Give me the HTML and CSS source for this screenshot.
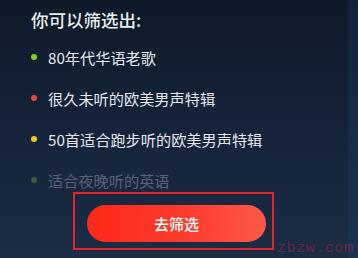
FILE: index.html
```html
<!DOCTYPE html>
<html lang="zh-CN">
<head>
<meta charset="utf-8">
<link rel="stylesheet" href="styles.css">
</head>
<body>
<div class="page">
  <main class="panel">
    <h1 class="title">你可以筛选出:</h1>
    <ul class="list">
      <li class="item"><span class="dot dot-green"></span>80年代华语老歌</li>
      <li class="item"><span class="dot dot-red"></span>很久未听的欧美男声特辑</li>
      <li class="item"><span class="dot dot-yellow"></span>50首适合跑步听的欧美男声特辑</li>
      <li class="item item-faded"><span class="dot dot-green"></span>适合夜晚听的英语</li>
    </ul>
    <div class="mark-box">
      <button class="cta">去筛选</button>
    </div>
  </main>
  <div class="edge"></div>
  <div class="watermark">zbzw.com</div>
</div>
</body>
</html>
```
FILE: styles.css
```css
* { box-sizing: border-box; }
html, body { margin: 0; padding: 0; }
body {
  width: 358px;
  height: 258px;
  overflow: hidden;
  font-family: "Noto Sans CJK SC", "Noto Sans", sans-serif;
}
.page {
  position: relative;
  display: flex;
  width: 358px;
  height: 258px;
}
.panel {
  flex: 0 0 348px;
  height: 258px;
  background: linear-gradient(180deg, #0f1a29 0%, #15243a 50%, #1b2c45 100%);
  padding-left: 31px;
  display: flex;
  flex-direction: column;
}
.edge {
  flex: 1 1 auto;
  background: linear-gradient(180deg, #14233c 0%, #1a2d4a 60%, #1e3352 100%);
}
.title {
  margin: 0;
  padding-top: 8px;
  height: 32px;
  line-height: 24px;
  font-size: 17.5px;
  font-weight: 500;
  color: #e9edf2;
}
.list {
  list-style: none;
  margin: 0;
  padding: 14.5px 0 0 0;
  display: flex;
  flex-direction: column;
  gap: 21px;
}
.item {
  display: flex;
  align-items: center;
  height: 20px;
  line-height: 20px;
  font-size: 15.2px;
  color: #e4e8ee;
}
.item-faded { opacity: 0.3; }
.dot {
  width: 6px;
  height: 6px;
  border-radius: 50%;
  margin-right: 11px;
  flex: 0 0 6px;
}
.dot-green { background: #7fd51f; }
.dot-red { background: #f2424a; }
.dot-yellow { background: #f5c414; }
.mark-box {
  margin-top: 2.5px;
  margin-left: 42px;
  width: 201px;
  height: 58px;
  border: 2px solid #e5232a;
  padding: 11px 6px 6px 12px;
}
.cta {
  display: block;
  width: 179px;
  height: 37px;
  border: 0;
  border-radius: 19px;
  background: linear-gradient(90deg, #ff2818 0%, #ff3a2a 50%, #ff5848 100%);
  color: #ffffff;
  font-family: "Noto Sans CJK SC", "Noto Sans", sans-serif;
  font-size: 15px;
  font-weight: 500;
  padding: 0;
  line-height: 37px;
}
.watermark {
  position: absolute;
  left: 277px;
  top: 240px;
  font-family: "Liberation Mono", monospace;
  font-size: 15px;
  letter-spacing: 0.6px;
  color: rgba(190, 40, 70, 0.45);
}
```
